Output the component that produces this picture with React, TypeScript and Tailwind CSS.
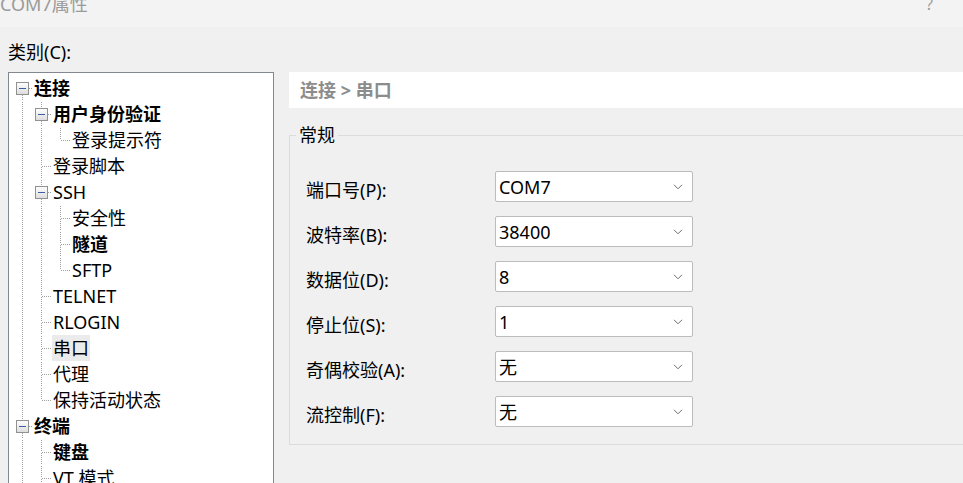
import React from "react";

type Cell = "blank" | "pipe" | "tee" | "elbow" | "rootBox" | "box";

type TreeRow = {
  label: string;
  cells: Cell[];
  bold?: boolean;
  selected?: boolean;
};

const rows: TreeRow[] = [
  { label: "连接", cells: ["rootBox"], bold: true },
  { label: "用户身份验证", cells: ["pipe", "box"], bold: true },
  { label: "登录提示符", cells: ["pipe", "pipe", "elbow"] },
  { label: "登录脚本", cells: ["pipe", "tee"] },
  { label: "SSH", cells: ["pipe", "box"] },
  { label: "安全性", cells: ["pipe", "pipe", "tee"] },
  { label: "隧道", cells: ["pipe", "pipe", "tee"], bold: true },
  { label: "SFTP", cells: ["pipe", "pipe", "elbow"] },
  { label: "TELNET", cells: ["pipe", "tee"] },
  { label: "RLOGIN", cells: ["pipe", "tee"] },
  { label: "串口", cells: ["pipe", "tee"], selected: true },
  { label: "代理", cells: ["pipe", "tee"] },
  { label: "保持活动状态", cells: ["pipe", "elbow"] },
  { label: "终端", cells: ["box"], bold: true },
  { label: "键盘", cells: ["pipe", "tee"], bold: true },
  { label: "VT 模式", cells: ["pipe", "tee"] },
];

const fields = [
  { label: "端口号(P):", value: "COM7" },
  { label: "波特率(B):", value: "38400" },
  { label: "数据位(D):", value: "8" },
  { label: "停止位(S):", value: "1" },
  { label: "奇偶校验(A):", value: "无" },
  { label: "流控制(F):", value: "无" },
];

const dot = { stroke: "#a0a0a0", strokeDasharray: "1 1", shapeRendering: "crispEdges" as const };

// one 19x26 column of the tree's connector lines
const TreeCell: React.FC<{ kind: Cell }> = ({ kind }) => {
  const up = kind === "tee" || kind === "elbow" || kind === "box";
  const down = kind === "tee" || kind === "box" || kind === "rootBox";
  const across = kind === "tee" || kind === "elbow";
  const hasBox = kind === "box" || kind === "rootBox";

  return (
    <svg width="19" height="26" viewBox="0 0 19 26" className="shrink-0">
      {kind === "pipe" && <line x1="9.5" y1="1" x2="9.5" y2="26" {...dot} />}
      {up && <line x1="9.5" y1="1" x2="9.5" y2="13" {...dot} />}
      {down && <line x1="9.5" y1="14" x2="9.5" y2="26" {...dot} />}
      {across && <line x1="10" y1="13.5" x2="19" y2="13.5" {...dot} />}
      {hasBox && (
        <>
          <defs>
            <linearGradient id="boxFill" x1="0" y1="0" x2="0" y2="1">
              <stop offset="0" stopColor="#ffffff" />
              <stop offset="1" stopColor="#dcdcdc" />
            </linearGradient>
          </defs>
          <rect x="3.5" y="7.5" width="12" height="12" fill="url(#boxFill)" stroke="#919191" shapeRendering="crispEdges" />
          <line x1="6" y1="13.5" x2="13" y2="13.5" stroke="#3c5ca4" strokeWidth="1" shapeRendering="crispEdges" />
          <line x1="16" y1="13.5" x2="19" y2="13.5" {...dot} />
        </>
      )}
    </svg>
  );
};

const Chevron = () => (
  <svg width="10" height="6" viewBox="0 0 10 6" className="shrink-0">
    <path d="M1 0.8 L5 4.8 L9 0.8" fill="none" stroke="#6b6b6b" strokeWidth="1" />
  </svg>
);

export default function App() {
  return (
    <div className="w-[963px] h-[483px] overflow-hidden bg-[#f0f0f0] text-black font-['Noto_Sans','Noto_Sans_CJK_SC',sans-serif] text-[18px]">
      {/* title bar */}
      <div className="h-[27px] bg-[#f3f3f3] flex justify-between overflow-hidden">
        <span className="-mt-[6px] leading-[20px] text-[#9a9a9a]">COM7属性</span>
        <span className="-mt-[6px] mr-[30px] leading-[20px] text-[#9a9a9a] text-[16px]">?</span>
      </div>

      <div className="pt-[15px] pl-[8px]">
        <div className="leading-[20px] h-[20px] mb-[10px]">类别(C):</div>

        <div className="flex">
          {/* category tree */}
          <div className="w-[266px] h-[420px] shrink-0 bg-white border border-[#828790] pt-[2px] pl-[4px]">
            {rows.map((row) => (
              <div key={row.label} className="flex h-[26px] items-center">
                {row.cells.map((c, i) => (
                  <TreeCell key={i} kind={c} />
                ))}
                <span
                  className={`ml-[1px] px-[1px] leading-[26px] whitespace-nowrap ${row.bold ? "font-bold" : ""} ${row.selected ? "bg-[#ebebeb]" : ""}`}
                >
                  {row.label}
                </span>
              </div>
            ))}
          </div>

          {/* property page */}
          <div className="ml-[15px] w-[720px] shrink-0">
            <div className="h-[36px] bg-white flex items-center pl-[11px] font-bold text-[#8c8c8c] leading-[20px]">
              连接 &gt; 串口
            </div>

            <fieldset className="mt-[15px] border border-[#dcdcdc] px-0 pb-[17px]">
              <legend className="ml-[6px] px-[3px] leading-[24px]">常规</legend>
              <div className="pt-[24px] pl-[16px] flex flex-col gap-[14px]">
                {fields.map((f) => (
                  <div key={f.label} className="flex items-center h-[31px]">
                    <div className="w-[189px] shrink-0 pt-[6px] leading-[20px]">{f.label}</div>
                    <div className="w-[198px] h-[31px] bg-white border border-[#bcbcbc] rounded-[2px] flex items-center justify-between pl-[3px] pr-[9px]">
                      <span className="leading-[20px]">{f.value}</span>
                      <Chevron />
                    </div>
                  </div>
                ))}
              </div>
            </fieldset>
          </div>
        </div>
      </div>
    </div>
  );
}
